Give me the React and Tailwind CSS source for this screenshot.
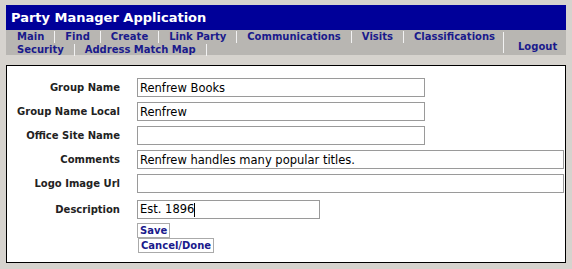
import { useState } from 'react';

const ROW1 = ['Main', 'Find', 'Create', 'Link Party', 'Communications', 'Visits', 'Classifications'];
const ROW2 = ['Security', 'Address Match Map'];

const FIELDS = [
  { label: 'Group Name', value: 'Renfrew Books', width: 'w-[288px]' },
  { label: 'Group Name Local', value: 'Renfrew', width: 'w-[288px]' },
  { label: 'Office Site Name', value: '', width: 'w-[288px]' },
  { label: 'Comments', value: 'Renfrew handles many popular titles.', width: 'w-[427px]' },
  { label: 'Logo Image Url', value: '', width: 'w-[427px]' },
];

function Tab({ name, last }) {
  return (
    <a href="#" className={`shrink-0 whitespace-nowrap px-[10px] h-[12px] leading-[12px] text-[#1a1a8c] no-underline ${last ? '' : 'border-r border-[#f2f2f2]'}`}>
      {name}
    </a>
  );
}

export default function App() {
  const [form, setForm] = useState(Object.fromEntries(FIELDS.map((f) => [f.label, f.value])));

  return (
    <div className="min-h-screen bg-[#d6d3ce] pt-[5px] px-[6px] pb-[7px] font-['DejaVu_Sans',Verdana,sans-serif]">
      <div className="bg-[#000099] h-[25px] flex items-center pl-[5px] pt-[1px] text-white font-bold text-[13px]">
        Party Manager Application
      </div>

      <div className="bg-[#b8b6b2] h-[25px] flex text-[10px] font-bold">
        <div className="w-[497px] pt-[1px] pl-px">
          <div className="flex h-[13px] items-start">
            {ROW1.map((t, i) => <Tab key={t} name={t} last={i === ROW1.length - 1} />)}
          </div>
          <div className="flex h-[12px]">
            {ROW2.map((t) => <Tab key={t} name={t} />)}
          </div>
        </div>
        <div className="flex-1 flex items-end pt-[2px] pb-[2px]">
          <a href="#" className="h-full flex items-end border-l border-[#f2f2f2] pl-[14px] text-[#1a1a8c] leading-[12px]">Logout</a>
        </div>
      </div>

      <div className="mt-[10px] bg-white border border-black h-[198px] pt-[12px]">
        <div className="grid grid-cols-[113px_auto] gap-x-[17px] gap-y-[5px] items-center">
          {FIELDS.map((f) => (
            <div key={f.label} className="contents">
              <label className="text-right text-[10px] font-bold text-[#222]">{f.label}</label>
              <input
                value={form[f.label]}
                onChange={(e) => setForm({ ...form, [f.label]: e.target.value })}
                className={`${f.width} h-[19px] border border-[#9a9a9a] px-[2px] text-[11.5px] text-black outline-none`}
              />
            </div>
          ))}
          <label className="text-right text-[10px] font-bold text-[#222] pt-[2px]">Description</label>
          <div className="w-[183px] h-[19px] border border-[#9a9a9a] flex items-center pl-[2px] text-[11.5px] text-black mt-[2px]">
            <span>Est. 1896</span>
            <span className="w-px h-[14px] bg-black" />
          </div>
        </div>
        <div className="ml-[130px] mt-[4px] flex flex-col items-start text-[10px] font-bold text-[#1a1a8c]">
          <button className="border border-[#aaa] bg-white px-[2px] h-[15px] leading-[13px]">Save</button>
          <button className="border border-[#aaa] bg-white px-[2px] h-[15px] leading-[13px] ml-px">Cancel/Done</button>
        </div>
      </div>
    </div>
  );
}
